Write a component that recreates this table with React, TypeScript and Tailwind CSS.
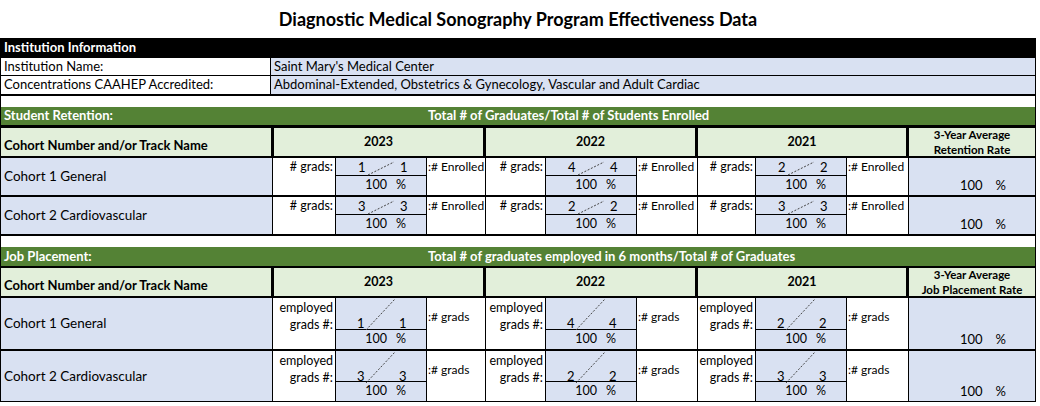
import React from "react";

const BLUE = "bg-[#d9e1f2]";

const years = [
  { y: "2023", gw: "w-[63px]", ew: "w-[59px]", hw: "w-[212px]", r: ["1", "1"], j: ["1", "1"], r2: ["3", "3"], j2: ["3", "3"] },
  { y: "2022", gw: "w-[60px]", ew: "w-[61px]", hw: "w-[212px]", r: ["4", "4"], j: ["4", "4"], r2: ["2", "2"], j2: ["2", "2"] },
  { y: "2021", gw: "w-[58px]", ew: "w-[62px]", hw: "w-[211px]", r: ["2", "2"], j: ["2", "2"], r2: ["3", "3"], j2: ["3", "3"] },
];

function Diag({ x1, y1, x2, y2 }: { x1: number; y1: number; x2: number; y2: number }) {
  return (
    <svg className="absolute inset-0 pointer-events-none" width="90" height="40">
      <line x1={x1} y1={y1} x2={x2} y2={y2} stroke="#444" strokeWidth="1" strokeDasharray="2 1.6" />
    </svg>
  );
}

function HeaderRow({ avg1, avg2 }: { avg1: string; avg2: string }) {
  return (
    <div className="flex h-[30px] border-b-2 border-black bg-[#e2efda]">
      <div className="w-[273px] border-r-[3px] border-black flex items-end pl-[3px] pb-[1px] text-[13px] font-bold">
        Cohort Number and/or Track Name
      </div>
      {years.map((yr) => (
        <div key={yr.y} className={`${yr.hw} border-r-[3px] border-black flex items-center justify-center text-[12.5px] font-bold`}>
          {yr.y}
        </div>
      ))}
      <div className="w-[126px] flex flex-col items-center justify-center text-[11.5px] font-bold leading-[15px]">
        <span>{avg1}</span>
        <span>{avg2}</span>
      </div>
    </div>
  );
}

function RetentionRow({ label, idx }: { label: string; idx: number }) {
  return (
    <div className="flex h-[39px] border-b-2 border-black">
      <div className={`w-[272px] border-r border-black ${BLUE} flex items-center pl-[3px] text-[13.5px]`}>{label}</div>
      {years.map((yr) => {
        const v = idx === 0 ? yr.r : yr.r2;
        return (
          <React.Fragment key={yr.y}>
            <div className={`${yr.gw} border-r border-black bg-white text-[12.5px] text-right pr-[2px] leading-[18px]`}># grads:</div>
            <div className="w-[91px] border-r border-black flex flex-col">
              <div className={`relative h-[20px] border-b border-black ${BLUE} text-[13px] leading-[19px]`}>
                <Diag x1={32} y1={17} x2={58} y2={4} />
                <span className="absolute left-[22px] top-0">{v[0]}</span>
                <span className="absolute left-[64px] top-0">{v[1]}</span>
              </div>
              <div className={`flex-1 ${BLUE} flex items-center justify-end pr-[20px] gap-[9px] text-[12.5px]`}>
                <span>100</span>
                <span>%</span>
              </div>
            </div>
            <div className={`${yr.ew} border-r border-black bg-white text-[12px] leading-[18px] pl-[1px]`}>:# Enrolled</div>
          </React.Fragment>
        );
      })}
      <div className={`w-[126px] ${BLUE} flex items-end justify-end pr-[29px] gap-[13px] text-[13px]`}>
        <span>100</span>
        <span>%</span>
      </div>
    </div>
  );
}

function JobRow({ label, idx, last }: { label: string; idx: number; last?: boolean }) {
  return (
    <div className={`flex ${last ? "h-[51px] border-b" : "h-[53px] border-b-2"} border-black`}>
      <div className={`w-[272px] border-r border-black ${BLUE} flex items-center pl-[3px] text-[13.5px]`}>{label}</div>
      {years.map((yr) => {
        const v = idx === 0 ? yr.j : yr.j2;
        return (
          <React.Fragment key={yr.y}>
            <div className={`${yr.gw} border-r border-black bg-white text-[12.5px] text-right pr-[2px] leading-[17px] pt-[1px] flex flex-col`}>
              <span>employed</span>
              <span>grads #:</span>
            </div>
            <div className="w-[91px] border-r border-black flex flex-col">
              <div className={`relative h-[34px] border-b border-black ${BLUE} text-[13px]`}>
                <Diag x1={30} y1={32} x2={59} y2={1} />
                <span className="absolute left-[21px] top-[17px] leading-[17px]">{v[0]}</span>
                <span className="absolute left-[63px] top-[17px] leading-[17px]">{v[1]}</span>
              </div>
              <div className={`flex-1 ${BLUE} flex items-center justify-end pr-[20px] gap-[9px] text-[12.5px]`}>
                <span>100</span>
                <span>%</span>
              </div>
            </div>
            <div className={`${yr.ew} border-r border-black bg-white text-[12px] leading-[17px] pl-[1px] pt-[10px]`}>:# grads</div>
          </React.Fragment>
        );
      })}
      <div className={`w-[126px] ${BLUE} flex items-end justify-end pr-[29px] gap-[13px] text-[13px]`}>
        <span>100</span>
        <span>%</span>
      </div>
    </div>
  );
}

export default function App() {
  return (
    <div className="w-[1040px] h-[406px] bg-white text-black overflow-hidden font-['Lato','Liberation_Sans',sans-serif]">
      <div className="w-[1036px] h-[38px] flex items-center justify-center text-[18px] font-bold">
        Diagnostic Medical Sonography Program Effectiveness Data
      </div>
      <div className="w-[1036px] border-x border-black">
        <div className="h-[20px] bg-black text-white font-bold text-[13px] flex items-center pl-[3px]">Institution Information</div>
        <div className="flex h-[18px] border-b border-black text-[13px]">
          <div className="w-[270px] border-r border-black bg-white pl-[3px] flex items-center">Institution Name:</div>
          <div className={`flex-1 ${BLUE} pl-[3px] flex items-center`}>Saint Mary's Medical Center</div>
        </div>
        <div className="flex h-[20px] border-b-2 border-black text-[13px]">
          <div className="w-[270px] border-r border-black bg-white pl-[3px] flex items-center">Concentrations CAAHEP Accredited:</div>
          <div className={`flex-1 ${BLUE} pl-[3px] flex items-center`}>
            Abdominal-Extended, Obstetrics &amp; Gynecology, Vascular and Adult Cardiac
          </div>
        </div>
        <div className="h-[11px] bg-white" />
        <div className="flex h-[21px] border-b-[3px] border-black bg-[#548235] text-white font-bold text-[13px] items-center">
          <div className="w-[427px] pl-[3px]">Student Retention:</div>
          <div>Total # of Graduates/Total # of Students Enrolled</div>
        </div>
        <HeaderRow avg1="3-Year Average" avg2="Retention Rate" />
        <RetentionRow label="Cohort 1 General" idx={0} />
        <RetentionRow label="Cohort 2 Cardiovascular" idx={1} />
        <div className="h-[11px] bg-white" />
        <div className="flex h-[21px] border-b-2 border-black bg-[#548235] text-white font-bold text-[13px] items-center">
          <div className="w-[427px] pl-[3px]">Job Placement:</div>
          <div>Total # of graduates employed in 6 months/Total # of Graduates</div>
        </div>
        <HeaderRow avg1="3-Year Average" avg2="Job Placement Rate" />
        <JobRow label="Cohort 1 General" idx={0} />
        <JobRow label="Cohort 2 Cardiovascular" idx={1} last />
      </div>
    </div>
  );
}
